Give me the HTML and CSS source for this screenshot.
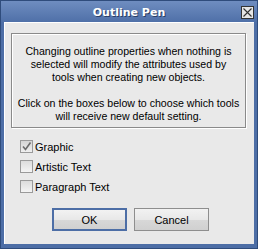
FILE: index.html
```html
<!DOCTYPE html>
<html>
<head>
<meta charset="utf-8">
<link rel="stylesheet" href="styles.css">
</head>
<body>
<div class="window">
  <div class="titlebar">
    <span class="title">Outline Pen</span>
    <span class="close"><svg width="11" height="11" viewBox="0 0 11 11"><path d="M1.5 1.5 L9.5 9.5 M9.5 1.5 L1.5 9.5" stroke="#333" stroke-width="1.1" fill="none"/></svg></span>
  </div>
  <div class="client">
    <div class="group">
      <p>Changing outline properties when nothing is<br>selected will modify the attributes used by<br>tools when creating new objects.</p>
      <p>Click on the boxes below to choose which tools<br>will receive new default setting.</p>
    </div>
    <div class="checks">
      <label class="check"><span class="box checked"><svg width="11" height="11" viewBox="0 0 11 11"><path d="M2 5.5 L4.5 8.5 L9.5 1.5" stroke="#6a6a6a" stroke-width="1.6" fill="none"/></svg></span>Graphic</label>
      <label class="check"><span class="box"></span>Artistic Text</label>
      <label class="check"><span class="box"></span>Paragraph Text</label>
    </div>
    <div class="buttons">
      <button class="btn default">OK</button>
      <button class="btn">Cancel</button>
    </div>
  </div>
</div>
</body>
</html>
```
FILE: styles.css
```css
html, body { margin: 0; padding: 0; }
body { width: 258px; height: 249px; overflow: hidden; font-family: "Liberation Sans", Arial, sans-serif; font-size: 11px; color: #000; }
.window {
  width: 258px; height: 249px; box-sizing: border-box;
  background: #4d6ea6;
  border: 1px solid #2f4c7c;
  display: flex; flex-direction: column;
}
.titlebar {
  height: 21px; position: relative;
  display: flex; align-items: center; justify-content: center;
  background: linear-gradient(#6f8dc0, #4f70a8);
}
.title {
  color: #fff; font-weight: bold; font-size: 11px;
  font-family: "DejaVu Sans", sans-serif;
  text-shadow: 1px 1px 0 #2a3f66;
  margin-top: 1px;
}
.close {
  position: absolute; right: 3px; top: 5px;
  width: 13px; height: 13px; box-sizing: border-box;
  border: 1px solid #333; background: #e6e6e6;
  display: flex; align-items: center; justify-content: center;
}
.client {
  flex: 1; margin: 0 3px 4px 3px;
  background: #e9e9e9;
  border-top: 1px solid #fff; border-left: 1px solid #fff;
  display: flex; flex-direction: column;
}
.group {
  margin: 10px 8px 0 6px;
  height: 95px; box-sizing: border-box;
  border: 1px solid #8a8a8a;
  box-shadow: inset 1px 1px 0 #fff, 1px 1px 0 #fff;
  padding: 11px 0 0 0;
  text-align: center; line-height: 13px;
  font-size: 10.6px; white-space: nowrap;
  display: flex; flex-direction: column; align-items: center;
}
.group p { margin: 0 0 13px 0; }
.checks { display: flex; flex-direction: column; gap: 7px; margin: 12px 0 0 15px; }
.check { display: flex; align-items: center; gap: 2px; height: 13px; }
.box {
  width: 13px; height: 13px; box-sizing: border-box;
  border: 1px solid #9a9a9a;
  background: linear-gradient(#dcdcdc, #f4f4f4);
  display: flex; align-items: center; justify-content: center;
}
.box.checked { background: linear-gradient(#d4d4d4, #efefef); }
.buttons { display: flex; gap: 7px; margin: 15px 0 0 47px; }
.btn {
  width: 75px; height: 23px; box-sizing: border-box;
  font-family: "Liberation Sans", Arial, sans-serif; font-size: 11px; color: #000;
  border: 1px solid #8e8e8e;
  background: linear-gradient(#f2f2f2 0%, #e8e8e8 50%, #d8d8d8 51%, #d0d0d0 100%);
  padding: 0;
}
.btn.default { border: 2px solid #4d6ea6; }
```
